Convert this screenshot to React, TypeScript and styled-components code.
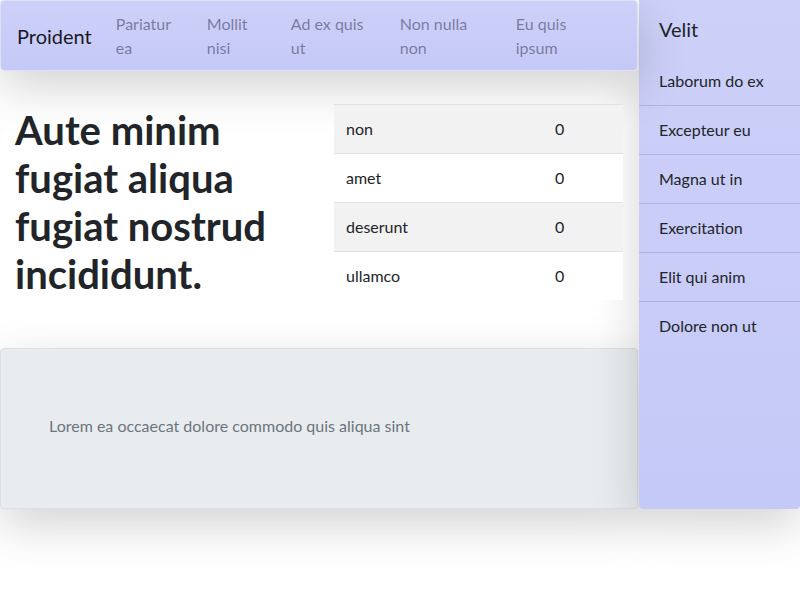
import * as React from "react";
import styled, { createGlobalStyle } from "styled-components";

const GlobalStyle = createGlobalStyle`
  html, body {
    margin: 0;
    padding: 0;
    background: #fff;
  }
  body {
    min-height: 600px;
    font-family: Lato, "Liberation Sans", sans-serif;
    font-size: 16px;
    line-height: 1.5;
    color: #212529;
  }
  #root {
    min-height: 600px;
  }
  * {
    box-sizing: border-box;
  }
`;

const lavender = "linear-gradient(180deg, #cdd0f8 0%, #c5c9f7 100%)";
const shadowLg = "0 16px 48px rgba(0, 0, 0, 0.175)";

const Page = styled.div`
  display: grid;
  grid-template-columns: 638px 161px;
  grid-template-rows: 71px 277px 161px;
  column-gap: 1px;
  width: 800px;
  padding-bottom: 91px;
`;

const Navbar = styled.nav`
  grid-column: 1;
  grid-row: 1;
  position: relative;
  z-index: 3;
  display: flex;
  align-items: center;
  padding: 0 16px;
  background: ${lavender};
  border: 1px solid #dfe1f0;
  border-radius: 4px;
  box-shadow: ${shadowLg};
`;

const Brand = styled.a`
  font-size: 20px;
  line-height: 30px;
  margin-right: 16px;
  color: rgba(0, 0, 0, 0.9);
  white-space: nowrap;
`;

const NavList = styled.div`
  display: grid;
  grid-template-columns: 91px 84px 109px 116px auto;
`;

const NavLink = styled.a<{ $text: number }>`
  display: block;
  padding: 0 8px;
  color: rgba(40, 40, 70, 0.5);
  line-height: 24px;
  span {
    display: block;
    max-width: ${(p) => p.$text}px;
  }
`;

const Main = styled.main`
  grid-column: 1;
  grid-row: 2;
  display: grid;
  grid-template-columns: 1fr 1fr;
  align-items: start;
  padding-top: 33px;
`;

const Col = styled.div<{ $offset?: number }>`
  padding: ${(p) => p.$offset ?? 0}px 15px 0;
  position: relative;
  z-index: 4;
`;

const Heading = styled.h1`
  margin: 0 0 8px;
  font-size: 40px;
  line-height: 48px;
  font-weight: 700;
  color: #212529;
`;

const Table = styled.table`
  width: 100%;
  border-collapse: collapse;
  background: #fff;
`;

const Row = styled.tr<{ $striped: boolean }>`
  background: ${(p) => (p.$striped ? "#f2f2f2" : "#fff")};
`;

const Cell = styled.td<{ $w?: number }>`
  padding: 12px;
  border-top: 1px solid #dee2e6;
  line-height: 24px;
  width: ${(p) => (p.$w ? `${p.$w}px` : "auto")};
`;

const Footer = styled.footer`
  grid-column: 1;
  grid-row: 3;
  position: relative;
  z-index: 1;
  display: flex;
  align-items: center;
  padding: 0 48px 6px;
  background: #e9ecef;
  border: 1px solid #dcdfe3;
  border-radius: 4px;
  box-shadow: ${shadowLg};
`;

const Lead = styled.p`
  margin: 0;
  color: #6c757d;
  font-weight: 400;
`;

const Sidebar = styled.aside`
  grid-column: 2;
  grid-row: 1 / 4;
  position: relative;
  z-index: 2;
  background: ${lavender};
  border-radius: 0 0 4px 4px;
  box-shadow: ${shadowLg};
`;

const SideTitle = styled.h5`
  margin: 0;
  padding: 17px 20px 16px;
  font-size: 20px;
  line-height: 24px;
  font-weight: 400;
`;

const SideList = styled.ul`
  list-style: none;
  margin: 0;
  padding: 0;
`;

const SideItem = styled.li`
  padding: 12px 20px;
  line-height: 24px;
  border-bottom: 1px solid rgba(0, 0, 0, 0.125);
  &:last-child {
    border-bottom: 0;
  }
`;

const links = [
  { label: "Pariatur ea", text: 60 },
  { label: "Mollit nisi", text: 52 },
  { label: "Ad ex quis ut", text: 78 },
  { label: "Non nulla non", text: 78 },
  { label: "Eu quis ipsum", text: 70 },
];

const rows = ["non", "amet", "deserunt", "ullamco"];

const items = [
  "Laborum do ex",
  "Excepteur eu",
  "Magna ut in",
  "Exercitation",
  "Elit qui anim",
  "Dolore non ut",
];

export default function App() {
  return (
    <>
      <GlobalStyle />
      <Page>
        <Navbar>
          <Brand>Proident</Brand>
          <NavList>
            {links.map((l) => (
              <NavLink key={l.label} $text={l.text}>
                <span>{l.label}</span>
              </NavLink>
            ))}
          </NavList>
        </Navbar>
        <Main>
          <Col $offset={2}>
            <Heading>Aute minim fugiat aliqua fugiat nostrud incididunt.</Heading>
          </Col>
          <Col>
            <Table>
              <tbody>
                {rows.map((r, i) => (
                  <Row key={r} $striped={i % 2 === 0}>
                    <Cell $w={209}>{r}</Cell>
                    <Cell>0</Cell>
                  </Row>
                ))}
              </tbody>
            </Table>
          </Col>
        </Main>
        <Footer>
          <Lead>Lorem ea occaecat dolore commodo quis aliqua sint</Lead>
        </Footer>
        <Sidebar>
          <SideTitle>Velit</SideTitle>
          <SideList>
            {items.map((it) => (
              <SideItem key={it}>{it}</SideItem>
            ))}
          </SideList>
        </Sidebar>
      </Page>
    </>
  );
}
